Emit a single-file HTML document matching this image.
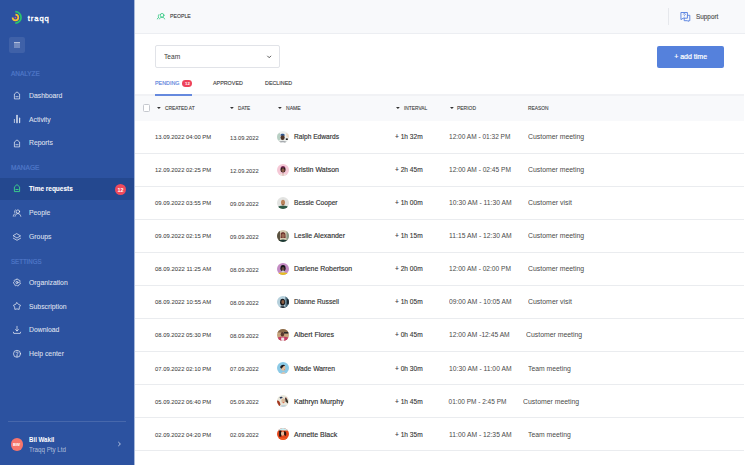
<!DOCTYPE html>
<html><head><meta charset="utf-8">
<style>
*{margin:0;padding:0;box-sizing:border-box}
html,body{width:745px;height:465px;overflow:hidden;background:#fff;font-family:"Liberation Sans",sans-serif}
.a{position:absolute;white-space:nowrap;line-height:1}
svg{position:absolute;overflow:visible}
</style></head><body>
<div class="a" style="left:0;top:0;width:134px;height:465px;background:#2c52a0"></div>
<svg style="left:0;top:0" width="30" height="30" viewBox="0 0 30 30">
<path d="M15.3 11.65 A5.75 5.75 0 0 1 15.3 23.15" fill="none" stroke="#2bc46d" stroke-width="1.7"/>
<path d="M15.45 14.6 A2.85 2.85 0 1 1 12.6 17.45" fill="none" stroke="#f7c12e" stroke-width="1.7"/>
<circle cx="15.4" cy="17.5" r="0.85" fill="#e8457a"/>
</svg>
<div class="a" style="left:27.70px;top:15.00px;font-size:7.6px;color:#fff;font-weight:normal;letter-spacing:0.95px;-webkit-text-stroke:0.35px #fff;">traqq</div>
<div class="a" style="left:9px;top:37px;width:16px;height:16px;border-radius:2px;background:rgba(255,255,255,0.09)"></div>
<div class="a" style="left:14px;top:42px;width:6px;height:6px;background:rgba(255,255,255,0.27);border-top:1px solid rgba(255,255,255,0.45)"></div>
<div class="a" style="left:10.60px;top:71.00px;font-size:6.3px;color:#5078c8;font-weight:normal;transform:scaleX(1.02);transform-origin:0 0;-webkit-text-stroke:0.2px #5078c8;">ANALYZE</div>
<svg style="left:10px;top:88px" width="14" height="14" viewBox="0 0 14 14"><g fill="none" stroke="rgba(255,255,255,0.78)" stroke-width="0.85" stroke-linecap="round" stroke-linejoin="round"><path d="M4.4 10.5 V6.0 L7 3.9 L9.6 6.0 V10.5 Z"/><path d="M5.9 8.7 H8.1"/></g></svg>
<div class="a" style="left:29.00px;top:92.00px;font-size:7.2px;color:rgba(255,255,255,0.8);font-weight:normal;transform:scaleX(0.95);transform-origin:0 0;-webkit-text-stroke:0.1px rgba(255,255,255,0.8);">Dashboard</div>
<svg style="left:10px;top:112px" width="14" height="14" viewBox="0 0 14 14"><g fill="none" stroke="rgba(255,255,255,0.78)" stroke-width="0.85" stroke-linecap="round" stroke-linejoin="round"><path d="M4.4 7.4 V10.6"/><path d="M7 3.6 V10.6" stroke-width="1.6"/><path d="M9.6 6.2 V10.6" stroke-width="1.2"/></g></svg>
<div class="a" style="left:29.00px;top:116.00px;font-size:7.2px;color:rgba(255,255,255,0.8);font-weight:normal;transform:scaleX(0.95);transform-origin:0 0;-webkit-text-stroke:0.1px rgba(255,255,255,0.8);">Activity</div>
<svg style="left:10px;top:136px" width="14" height="14" viewBox="0 0 14 14"><g fill="none" stroke="rgba(255,255,255,0.78)" stroke-width="0.85" stroke-linecap="round" stroke-linejoin="round"><path d="M4.4 10.5 V6.0 L7 3.9 L9.6 6.0 V10.5 Z"/><path d="M5.9 8.7 H8.1"/></g></svg>
<div class="a" style="left:29.00px;top:139.00px;font-size:7.2px;color:rgba(255,255,255,0.8);font-weight:normal;transform:scaleX(0.95);transform-origin:0 0;-webkit-text-stroke:0.1px rgba(255,255,255,0.8);">Reports</div>
<div class="a" style="left:10.60px;top:165.00px;font-size:6.3px;color:#5078c8;font-weight:normal;transform:scaleX(1.04);transform-origin:0 0;-webkit-text-stroke:0.2px #5078c8;">MANAGE</div>
<div class="a" style="left:0;top:178px;width:134px;height:21.6px;background:#24488f"></div>
<svg style="left:10px;top:181.3px" width="14" height="14" viewBox="0 0 14 14"><g fill="none" stroke="#3ccf8c" stroke-width="0.95" stroke-linecap="round" stroke-linejoin="round"><path d="M4.4 10.2 V5.9 L7 3.6 L9.6 5.9 V10.2 Z"/><path d="M5.9 8.5 H8.1"/></g></svg>
<div class="a" style="left:29.00px;top:185.00px;font-size:7.2px;color:#fff;font-weight:bold;transform:scaleX(0.9);transform-origin:0 0;-webkit-text-stroke:0.1px #fff;">Time requests</div>
<div class="a" style="left:115px;top:183.9px;width:11px;height:11px;border-radius:50%;background:#ef4a5c"></div>
<div class="a" style="left:117.40px;top:188.00px;font-size:5.4px;color:#fff;font-weight:bold;">12</div>
<svg style="left:10px;top:206px" width="14" height="14" viewBox="0 0 14 14"><g fill="none" stroke="rgba(255,255,255,0.78)" stroke-width="0.85" stroke-linecap="round" stroke-linejoin="round"><circle cx="7.9" cy="5.6" r="1.7"/><path d="M5 10.3 C5.4 8.4 6.5 7.6 7.9 7.6 C9.3 7.6 10.4 8.4 10.8 10.3"/><path d="M5.3 3.9 C4.4 4.4 4.3 6.2 5 7"/><path d="M3.3 10.2 C3.4 9 3.9 8.3 4.5 8"/></g></svg>
<div class="a" style="left:29.00px;top:209.00px;font-size:7.2px;color:rgba(255,255,255,0.8);font-weight:normal;transform:scaleX(0.95);transform-origin:0 0;-webkit-text-stroke:0.1px rgba(255,255,255,0.8);">People</div>
<svg style="left:10px;top:229.5px" width="14" height="14" viewBox="0 0 14 14"><g fill="none" stroke="rgba(255,255,255,0.78)" stroke-width="0.85" stroke-linecap="round" stroke-linejoin="round"><path d="M7 3.8 L10.6 5.9 L7 8 L3.4 5.9 Z"/><path d="M3.4 8.2 L7 10.3 L10.6 8.2"/></g></svg>
<div class="a" style="left:29.00px;top:233.00px;font-size:7.2px;color:rgba(255,255,255,0.8);font-weight:normal;transform:scaleX(0.95);transform-origin:0 0;-webkit-text-stroke:0.1px rgba(255,255,255,0.8);">Groups</div>
<div class="a" style="left:10.60px;top:259.00px;font-size:6.3px;color:#5078c8;font-weight:normal;transform:scaleX(0.97);transform-origin:0 0;-webkit-text-stroke:0.2px #5078c8;">SETTINGS</div>
<svg style="left:10px;top:275px" width="14" height="14" viewBox="0 0 14 14"><g fill="none" stroke="rgba(255,255,255,0.78)" stroke-width="0.85" stroke-linecap="round" stroke-linejoin="round"><path d="M7.00 4.00 L7.78 4.09 L8.26 4.89 L8.81 5.23 L9.74 5.32 L10.15 5.98 L9.83 6.85 L9.90 7.50 L10.41 8.28 L10.15 9.02 L9.27 9.31 L8.81 9.77 L8.52 10.65 L7.78 10.91 L7.00 10.40 L6.35 10.33 L5.48 10.65 L4.82 10.24 L4.73 9.31 L4.39 8.76 L3.59 8.28 L3.50 7.50 L4.17 6.85 L4.39 6.24 L4.26 5.32 L4.82 4.76 L5.74 4.89 L6.35 4.67 Z"/><circle cx="7" cy="7.5" r="1.1"/></g></svg>
<div class="a" style="left:29.00px;top:279.00px;font-size:7.2px;color:rgba(255,255,255,0.8);font-weight:normal;transform:scaleX(0.95);transform-origin:0 0;-webkit-text-stroke:0.1px rgba(255,255,255,0.8);">Organization</div>
<svg style="left:10px;top:299px" width="14" height="14" viewBox="0 0 14 14"><g fill="none" stroke="rgba(255,255,255,0.78)" stroke-width="0.85" stroke-linecap="round" stroke-linejoin="round"><path d="M7.00 3.70 L8.47 5.38 L10.52 6.26 L9.38 8.17 L9.17 10.39 L7.00 9.90 L4.83 10.39 L4.62 8.17 L3.48 6.26 L5.53 5.38 Z"/></g></svg>
<div class="a" style="left:29.00px;top:303.00px;font-size:7.2px;color:rgba(255,255,255,0.8);font-weight:normal;transform:scaleX(0.95);transform-origin:0 0;-webkit-text-stroke:0.1px rgba(255,255,255,0.8);">Subscription</div>
<svg style="left:10px;top:323px" width="14" height="14" viewBox="0 0 14 14"><g fill="none" stroke="rgba(255,255,255,0.78)" stroke-width="0.85" stroke-linecap="round" stroke-linejoin="round"><path d="M7 3.3 V7.9"/><path d="M5.5 6.6 L7 8 L8.5 6.6"/><path d="M3.4 9.2 L3.8 10.4 H10.2 L10.6 9.2"/></g></svg>
<div class="a" style="left:29.00px;top:326.00px;font-size:7.2px;color:rgba(255,255,255,0.8);font-weight:normal;transform:scaleX(0.95);transform-origin:0 0;-webkit-text-stroke:0.1px rgba(255,255,255,0.8);">Download</div>
<svg style="left:10px;top:347px" width="14" height="14" viewBox="0 0 14 14"><g fill="none" stroke="rgba(255,255,255,0.78)" stroke-width="0.85" stroke-linecap="round" stroke-linejoin="round"><circle cx="7" cy="6.8" r="3.5"/><path d="M6 5.7 C6 4.6 8 4.6 8 5.8 C8 6.7 7 6.7 7 7.7"/><circle cx="7" cy="9" r="0.2"/></g></svg>
<div class="a" style="left:29.00px;top:350.00px;font-size:7.2px;color:rgba(255,255,255,0.8);font-weight:normal;transform:scaleX(0.95);transform-origin:0 0;-webkit-text-stroke:0.1px rgba(255,255,255,0.8);">Help center</div>
<div class="a" style="left:8px;top:421px;width:118px;height:1px;background:rgba(255,255,255,0.13)"></div>
<div class="a" style="left:10.6px;top:438.3px;width:12.7px;height:12.7px;border-radius:50%;background:#f6756c"></div>
<div class="a" style="left:13.00px;top:443.00px;font-size:4.2px;color:#fff;font-weight:bold;">BW</div>
<div class="a" style="left:29.40px;top:437.00px;font-size:6.6px;color:#fff;font-weight:bold;transform:scaleX(0.93);transform-origin:0 0;">Bil Wakil</div>
<div class="a" style="left:28.90px;top:447.00px;font-size:6.6px;color:rgba(255,255,255,0.62);font-weight:normal;transform:scaleX(0.94);transform-origin:0 0;">Traqq Pty Ltd</div>
<svg style="left:114px;top:439px" width="10" height="10" viewBox="0 0 10 10"><path d="M4.6 3.3 L6.4 5 L4.6 6.7" fill="none" stroke="rgba(255,255,255,0.75)" stroke-width="0.9" stroke-linecap="round" stroke-linejoin="round"/></svg>
<div class="a" style="left:134px;top:0;width:1px;height:465px;background:#a8b9da;z-index:5"></div>
<div class="a" style="left:134px;top:0;width:611px;height:34px;background:#f8f9fb;border-bottom:1px solid #eceef2"></div>
<svg style="left:150px;top:6px" width="20" height="20" viewBox="0 0 20 20"><g fill="none" stroke="#3fcb8a" stroke-width="0.95" stroke-linecap="round"><circle cx="12.1" cy="9.3" r="1.85"/><path d="M9.4 12.9 C9.7 11.9 10.7 11.3 12.1 11.3 C13.5 11.3 14.4 11.9 14.6 12.9"/><path d="M9.0 8.4 C8.2 9.0 8.1 10.4 8.5 11.2"/><path d="M7.4 12.9 C7.6 12.2 8.0 11.7 8.5 11.4"/></g></svg>
<div class="a" style="left:169.80px;top:14.00px;font-size:5.7px;color:#404040;font-weight:normal;transform:scaleX(0.91);transform-origin:0 0;-webkit-text-stroke:0.12px #404040;">PEOPLE</div>
<div class="a" style="left:668px;top:8px;width:1px;height:17px;background:#e6e8ec"></div>
<svg style="left:676px;top:8px" width="20" height="20" viewBox="0 0 20 20"><g fill="none" stroke="#5a84e0" stroke-width="0.95" stroke-linejoin="round" stroke-linecap="round"><path d="M5.3 4.5 H11.4 V10.2 H7.2 L5.3 11.4 Z"/><path d="M11.4 7.3 H13.8 V12.7 L12.4 12.7 V13.4 L11.3 12.7 H8.2 V10.2"/><path d="M7.3 6.0 C7.4 5.3 9.3 5.3 9.3 6.2 C9.3 7.0 8.3 7.0 8.3 7.8"/></g><circle cx="8.3" cy="9.0" r="0.35" fill="#5a84e0"/></svg>
<div class="a" style="left:696.00px;top:13.00px;font-size:7.0px;color:#4a4a4a;font-weight:normal;transform:scaleX(0.91);transform-origin:0 0;-webkit-text-stroke:0.12px #4a4a4a;">Support</div>
<div class="a" style="left:155px;top:45px;width:124.5px;height:22.6px;border:1px solid #e1e3e8;border-radius:2px;background:#fff"></div>
<div class="a" style="left:164.10px;top:54.00px;font-size:6.7px;color:#3a3a3a;font-weight:normal;transform:scaleX(0.99);transform-origin:0 0;">Team</div>
<svg style="left:264px;top:52px" width="10" height="10" viewBox="0 0 10 10"><path d="M3.6 4.1 L5.2 5.7 L6.8 4.1" fill="none" stroke="#444" stroke-width="0.9" stroke-linecap="round" stroke-linejoin="round"/></svg>
<div class="a" style="left:657.3px;top:45.9px;width:66.6px;height:21.8px;border-radius:2px;background:#5581dc"></div>
<div class="a" style="left:674.20px;top:53.00px;font-size:7.0px;color:#fff;font-weight:normal;-webkit-text-stroke:0.2px #fff;">+ add time</div>
<div class="a" style="left:155.40px;top:81.00px;font-size:5.6px;color:#5b82dc;font-weight:normal;transform:scaleX(0.96);transform-origin:0 0;-webkit-text-stroke:0.15px #5b82dc;">PENDING</div>
<div class="a" style="left:182.2px;top:80px;width:10.1px;height:6.8px;border-radius:3.4px;background:#ee4259"></div>
<div class="a" style="left:185.00px;top:82.00px;font-size:4.3px;color:#fff;font-weight:bold;">12</div>
<div class="a" style="left:213.00px;top:81.00px;font-size:5.6px;color:#404040;font-weight:normal;transform:scaleX(0.96);transform-origin:0 0;-webkit-text-stroke:0.12px #404040;">APPROVED</div>
<div class="a" style="left:264.80px;top:81.00px;font-size:5.6px;color:#404040;font-weight:normal;transform:scaleX(0.96);transform-origin:0 0;-webkit-text-stroke:0.12px #404040;">DECLINED</div>
<div class="a" style="left:134px;top:94px;width:610px;height:27px;background:#f8f9fb;border-top:2px solid #f1f2f5"></div>
<div class="a" style="left:155px;top:94px;width:37.3px;height:2px;background:#6589de"></div>
<div class="a" style="left:143px;top:104.2px;width:7.3px;height:7.4px;border:0.8px solid #c5c8ce;border-radius:1.5px;background:#fff"></div>
<svg style="left:157.3px;top:107.3px" width="4" height="2.2" viewBox="0 0 4 2.2"><path d="M0 0 H3.8 L1.9 2 Z" fill="#333"/></svg>
<div class="a" style="left:165.40px;top:106.00px;font-size:5.45px;color:#444;font-weight:normal;transform:scaleX(0.89);transform-origin:0 0;-webkit-text-stroke:0.12px #444;">CREATED AT</div>
<svg style="left:229.8px;top:107.3px" width="4" height="2.2" viewBox="0 0 4 2.2"><path d="M0 0 H3.8 L1.9 2 Z" fill="#333"/></svg>
<div class="a" style="left:237.90px;top:106.00px;font-size:5.45px;color:#444;font-weight:normal;transform:scaleX(0.86);transform-origin:0 0;-webkit-text-stroke:0.12px #444;">DATE</div>
<svg style="left:277.5px;top:107.3px" width="4" height="2.2" viewBox="0 0 4 2.2"><path d="M0 0 H3.8 L1.9 2 Z" fill="#333"/></svg>
<div class="a" style="left:285.80px;top:106.00px;font-size:5.45px;color:#444;font-weight:normal;transform:scaleX(0.93);transform-origin:0 0;-webkit-text-stroke:0.12px #444;">NAME</div>
<svg style="left:395.8px;top:107.3px" width="4" height="2.2" viewBox="0 0 4 2.2"><path d="M0 0 H3.8 L1.9 2 Z" fill="#333"/></svg>
<div class="a" style="left:403.90px;top:106.00px;font-size:5.45px;color:#444;font-weight:normal;transform:scaleX(0.89);transform-origin:0 0;-webkit-text-stroke:0.12px #444;">INTERVAL</div>
<svg style="left:449.6px;top:107.3px" width="4" height="2.2" viewBox="0 0 4 2.2"><path d="M0 0 H3.8 L1.9 2 Z" fill="#333"/></svg>
<div class="a" style="left:457.20px;top:106.00px;font-size:5.45px;color:#444;font-weight:normal;transform:scaleX(0.91);transform-origin:0 0;-webkit-text-stroke:0.12px #444;">PERIOD</div>
<div class="a" style="left:528.10px;top:106.00px;font-size:5.45px;color:#444;font-weight:normal;transform:scaleX(0.89);transform-origin:0 0;-webkit-text-stroke:0.12px #444;">REASON</div>
<div class="a" style="left:134px;top:153.03px;width:610px;height:1px;background:#eaecef"></div>
<div class="a" style="left:155.40px;top:134.00px;font-size:6.2px;color:#444;font-weight:normal;transform:scaleX(0.9495603012956522);transform-origin:0 0;-webkit-text-stroke:0.05px #444;">13.09.2022 04:00 PM</div>
<div class="a" style="left:230.20px;top:135.00px;font-size:6.2px;color:#444;font-weight:normal;transform:scaleX(0.9248815700428604);transform-origin:0 0;-webkit-text-stroke:0.05px #444;">13.09.2022</div>
<svg style="left:277.2px;top:130.90px" width="12" height="12" viewBox="0 0 12 12"><defs><clipPath id="c0"><circle cx="6" cy="6" r="6"/></clipPath></defs><g clip-path="url(#c0)"><rect width="12" height="12" fill="#eef0ee"/><path d="M0 3 L3 2 L3.5 9 L0 10Z" fill="#b8d0c4"/><path d="M9 2 L12 3 V7 L9.5 6Z" fill="#f0d8c0"/><ellipse cx="5.6" cy="6.4" rx="2.1" ry="2.6" fill="#4e3326"/><path d="M3.2 4.4 C3.4 2.2 7.6 2.2 8 4.4 Z" fill="#2f558e"/><path d="M1.5 12 C2 9.2 9 9 10.5 12Z" fill="#a8acb0"/><path d="M3 12 C4 10.5 7 10.5 8 12Z" fill="#e8eaec"/><rect x="8.8" y="7.4" width="2" height="1.6" fill="#222"/></g></svg>
<div class="a" style="left:294.00px;top:134.00px;font-size:6.85px;color:#333;font-weight:normal;transform:scaleX(0.9687867668033374);transform-origin:0 0;-webkit-text-stroke:0.15px #333;">Ralph Edwards</div>
<div class="a" style="left:395.00px;top:134.00px;font-size:6.6px;color:#333;font-weight:normal;-webkit-text-stroke:0.1px #333;">+ 1h 32m</div>
<div class="a" style="left:448.60px;top:134.00px;font-size:6.5px;color:#4a4a4a;font-weight:normal;transform:scaleX(1.0055518252239564);transform-origin:0 0;">12:00 AM - 01:32 PM</div>
<div class="a" style="left:528.00px;top:134.00px;font-size:6.5px;color:#4a4a4a;font-weight:normal;transform:scaleX(1.0582807645231147);transform-origin:0 0;">Customer meeting</div>
<div class="a" style="left:134px;top:186.06px;width:610px;height:1px;background:#eaecef"></div>
<div class="a" style="left:155.40px;top:167.00px;font-size:6.2px;color:#444;font-weight:normal;transform:scaleX(0.9495603012956522);transform-origin:0 0;-webkit-text-stroke:0.05px #444;">12.09.2022 02:25 PM</div>
<div class="a" style="left:230.20px;top:168.00px;font-size:6.2px;color:#444;font-weight:normal;transform:scaleX(0.9248815700428604);transform-origin:0 0;-webkit-text-stroke:0.05px #444;">12.09.2022</div>
<svg style="left:277.2px;top:163.93px" width="12" height="12" viewBox="0 0 12 12"><defs><clipPath id="c1"><circle cx="6" cy="6" r="6"/></clipPath></defs><g clip-path="url(#c1)"><rect width="12" height="12" fill="#f5c8d6"/><ellipse cx="6" cy="5.4" rx="2.5" ry="3" fill="#2a1a1c"/><path d="M3.6 3.6 C4.5 1.8 7.5 1.8 8.4 3.6Z" fill="#8a2a60"/><ellipse cx="6" cy="6.2" rx="1.5" ry="2" fill="#8a5a46"/><path d="M2.4 12 C3 8.8 9 8.8 9.6 12Z" fill="#ebe4de"/><path d="M5.4 9 L6.6 9 L6.3 12 L5.7 12Z" fill="#d8a0a0"/></g></svg>
<div class="a" style="left:294.00px;top:167.00px;font-size:6.85px;color:#333;font-weight:normal;transform:scaleX(1.0250184218588596);transform-origin:0 0;-webkit-text-stroke:0.15px #333;">Kristin Watson</div>
<div class="a" style="left:395.00px;top:167.00px;font-size:6.6px;color:#333;font-weight:normal;-webkit-text-stroke:0.1px #333;">+ 2h 45m</div>
<div class="a" style="left:448.60px;top:167.00px;font-size:6.5px;color:#4a4a4a;font-weight:normal;transform:scaleX(1.0137403580026532);transform-origin:0 0;">12:00 AM - 02:45 PM</div>
<div class="a" style="left:528.00px;top:167.00px;font-size:6.5px;color:#4a4a4a;font-weight:normal;transform:scaleX(1.0582807645231147);transform-origin:0 0;">Customer meeting</div>
<div class="a" style="left:134px;top:219.09px;width:610px;height:1px;background:#eaecef"></div>
<div class="a" style="left:155.40px;top:200.00px;font-size:6.2px;color:#444;font-weight:normal;transform:scaleX(0.9495603012956522);transform-origin:0 0;-webkit-text-stroke:0.05px #444;">09.09.2022 03:55 PM</div>
<div class="a" style="left:230.20px;top:201.00px;font-size:6.2px;color:#444;font-weight:normal;transform:scaleX(0.9248815700428604);transform-origin:0 0;-webkit-text-stroke:0.05px #444;">09.09.2022</div>
<svg style="left:277.2px;top:196.96px" width="12" height="12" viewBox="0 0 12 12"><defs><clipPath id="c2"><circle cx="6" cy="6" r="6"/></clipPath></defs><g clip-path="url(#c2)"><rect width="12" height="12" fill="#e2e3e1"/><ellipse cx="6" cy="5.6" rx="2" ry="2.8" fill="#b8825a"/><path d="M4.6 7.6 C5 8.6 7 8.6 7.4 7.6Z" fill="#6a4030"/><path d="M0.5 10 C2.5 8.4 9.5 8.4 11.5 10 V12 H0.5Z" fill="#2d5a46"/></g></svg>
<div class="a" style="left:294.00px;top:200.00px;font-size:6.85px;color:#333;font-weight:normal;transform:scaleX(0.9704167561594199);transform-origin:0 0;-webkit-text-stroke:0.15px #333;">Bessie Cooper</div>
<div class="a" style="left:395.00px;top:200.00px;font-size:6.6px;color:#333;font-weight:normal;-webkit-text-stroke:0.1px #333;">+ 1h 00m</div>
<div class="a" style="left:448.60px;top:200.00px;font-size:6.5px;color:#4a4a4a;font-weight:normal;transform:scaleX(1.0394786001909584);transform-origin:0 0;">10:30 AM - 11:30 AM</div>
<div class="a" style="left:528.00px;top:200.00px;font-size:6.5px;color:#4a4a4a;font-weight:normal;transform:scaleX(1.0661162042377512);transform-origin:0 0;">Customer visit</div>
<div class="a" style="left:134px;top:252.12px;width:610px;height:1px;background:#eaecef"></div>
<div class="a" style="left:155.40px;top:233.00px;font-size:6.2px;color:#444;font-weight:normal;transform:scaleX(0.9495603012956522);transform-origin:0 0;-webkit-text-stroke:0.05px #444;">09.09.2022 02:15 PM</div>
<div class="a" style="left:230.20px;top:234.00px;font-size:6.2px;color:#444;font-weight:normal;transform:scaleX(0.9248815700428604);transform-origin:0 0;-webkit-text-stroke:0.05px #444;">09.09.2022</div>
<svg style="left:277.2px;top:229.99px" width="12" height="12" viewBox="0 0 12 12"><defs><clipPath id="c3"><circle cx="6" cy="6" r="6"/></clipPath></defs><g clip-path="url(#c3)"><rect width="12" height="12" fill="#d4cab0"/><rect x="0" y="0" width="3" height="12" fill="#5a5240"/><rect x="9.5" y="0" width="2.5" height="12" fill="#8a9a88"/><path d="M3.8 3.6 C4.5 1.8 7.8 1.8 8.4 4 L8.6 8 L3.6 8Z" fill="#6a2c2a"/><ellipse cx="6.1" cy="5.8" rx="1.7" ry="2.2" fill="#9a6a52"/><path d="M1.5 12 C2.5 8.8 9.5 8.8 10.5 12Z" fill="#1c3a36"/></g></svg>
<div class="a" style="left:294.00px;top:233.00px;font-size:6.85px;color:#333;font-weight:normal;transform:scaleX(1.0166058891521588);transform-origin:0 0;-webkit-text-stroke:0.15px #333;">Leslie Alexander</div>
<div class="a" style="left:395.00px;top:233.00px;font-size:6.6px;color:#333;font-weight:normal;-webkit-text-stroke:0.1px #333;">+ 1h 15m</div>
<div class="a" style="left:448.60px;top:233.00px;font-size:6.5px;color:#4a4a4a;font-weight:normal;transform:scaleX(1.0394786001909584);transform-origin:0 0;">11:15 AM - 12:30 AM</div>
<div class="a" style="left:528.00px;top:233.00px;font-size:6.5px;color:#4a4a4a;font-weight:normal;transform:scaleX(1.0582807645231147);transform-origin:0 0;">Customer meeting</div>
<div class="a" style="left:134px;top:285.15px;width:610px;height:1px;background:#eaecef"></div>
<div class="a" style="left:155.40px;top:266.00px;font-size:6.2px;color:#444;font-weight:normal;transform:scaleX(0.9625445369186265);transform-origin:0 0;-webkit-text-stroke:0.05px #444;">08.09.2022 11:25 AM</div>
<div class="a" style="left:230.20px;top:267.00px;font-size:6.2px;color:#444;font-weight:normal;transform:scaleX(0.9248815700428604);transform-origin:0 0;-webkit-text-stroke:0.05px #444;">08.09.2022</div>
<svg style="left:277.2px;top:263.02px" width="12" height="12" viewBox="0 0 12 12"><defs><clipPath id="c4"><circle cx="6" cy="6" r="6"/></clipPath></defs><g clip-path="url(#c4)"><rect width="12" height="12" fill="#c48cc4"/><ellipse cx="6" cy="5.2" rx="2.6" ry="3.2" fill="#18141a"/><ellipse cx="6" cy="6" rx="1.5" ry="1.9" fill="#6a4a42"/><rect x="4.6" y="7.6" width="2.8" height="2" fill="#cfd0e6"/><path d="M1 10.4 C3 9.2 9 9.2 11 10.4 V12 H1Z" fill="#e6c022"/></g></svg>
<div class="a" style="left:294.00px;top:266.00px;font-size:6.85px;color:#333;font-weight:normal;transform:scaleX(1.0121932767409465);transform-origin:0 0;-webkit-text-stroke:0.15px #333;">Darlene Robertson</div>
<div class="a" style="left:395.00px;top:266.00px;font-size:6.6px;color:#333;font-weight:normal;-webkit-text-stroke:0.1px #333;">+ 2h 00m</div>
<div class="a" style="left:448.60px;top:266.00px;font-size:6.5px;color:#4a4a4a;font-weight:normal;transform:scaleX(1.0137403580026532);transform-origin:0 0;">12:00 AM - 02:00 PM</div>
<div class="a" style="left:528.00px;top:266.00px;font-size:6.5px;color:#4a4a4a;font-weight:normal;transform:scaleX(1.0582807645231147);transform-origin:0 0;">Customer meeting</div>
<div class="a" style="left:134px;top:318.18px;width:610px;height:1px;background:#eaecef"></div>
<div class="a" style="left:155.40px;top:299.00px;font-size:6.2px;color:#444;font-weight:normal;transform:scaleX(0.9550531301315022);transform-origin:0 0;-webkit-text-stroke:0.05px #444;">08.09.2022 10:55 AM</div>
<div class="a" style="left:230.20px;top:300.00px;font-size:6.2px;color:#444;font-weight:normal;transform:scaleX(0.9248815700428604);transform-origin:0 0;-webkit-text-stroke:0.05px #444;">08.09.2022</div>
<svg style="left:277.2px;top:296.05px" width="12" height="12" viewBox="0 0 12 12"><defs><clipPath id="c5"><circle cx="6" cy="6" r="6"/></clipPath></defs><g clip-path="url(#c5)"><rect width="12" height="12" fill="#b6d0dc"/><rect x="8.4" y="0" width="3.6" height="12" fill="#4a6878"/><path d="M10 3 L12 3 L12 9 L10 8Z" fill="#1e2a34"/><ellipse cx="5.6" cy="6.2" rx="2.5" ry="3.4" fill="#18181c"/><ellipse cx="5.9" cy="6" rx="1.5" ry="2.1" fill="#8c6046"/><path d="M2 12 C3 9.6 8 9.6 9 12Z" fill="#1c2630"/></g></svg>
<div class="a" style="left:294.00px;top:299.00px;font-size:6.85px;color:#333;font-weight:normal;transform:scaleX(0.9767087519615568);transform-origin:0 0;-webkit-text-stroke:0.15px #333;">Dianne Russell</div>
<div class="a" style="left:395.00px;top:299.00px;font-size:6.6px;color:#333;font-weight:normal;-webkit-text-stroke:0.1px #333;">+ 1h 05m</div>
<div class="a" style="left:448.60px;top:299.00px;font-size:6.5px;color:#4a4a4a;font-weight:normal;transform:scaleX(1.0312420206413138);transform-origin:0 0;">09:00 AM - 10:05 AM</div>
<div class="a" style="left:528.00px;top:299.00px;font-size:6.5px;color:#4a4a4a;font-weight:normal;transform:scaleX(1.0661162042377512);transform-origin:0 0;">Customer visit</div>
<div class="a" style="left:134px;top:351.21px;width:610px;height:1px;background:#eaecef"></div>
<div class="a" style="left:155.40px;top:332.00px;font-size:6.2px;color:#444;font-weight:normal;transform:scaleX(0.9495603012956522);transform-origin:0 0;-webkit-text-stroke:0.05px #444;">08.09.2022 05:30 PM</div>
<div class="a" style="left:230.20px;top:333.00px;font-size:6.2px;color:#444;font-weight:normal;transform:scaleX(0.9248815700428604);transform-origin:0 0;-webkit-text-stroke:0.05px #444;">08.09.2022</div>
<svg style="left:277.2px;top:329.08px" width="12" height="12" viewBox="0 0 12 12"><defs><clipPath id="c6"><circle cx="6" cy="6" r="6"/></clipPath></defs><g clip-path="url(#c6)"><rect width="12" height="12" fill="#c6a47e"/><path d="M0 0 H12 V3.6 H0Z" fill="#8a6a4a"/><rect x="7" y="3" width="4.5" height="1.6" fill="#2a2a2a"/><ellipse cx="5.4" cy="5.2" rx="1.7" ry="2.2" fill="#5a3a2e"/><path d="M0.5 8.6 C3 7.4 9 7.4 11.5 8.6 V12 H0.5Z" fill="#c63c64"/><rect x="4.2" y="8.6" width="3" height="3.4" fill="#f2e6ea"/></g></svg>
<div class="a" style="left:294.00px;top:332.00px;font-size:6.85px;color:#333;font-weight:normal;transform:scaleX(1.0326361966026014);transform-origin:0 0;-webkit-text-stroke:0.15px #333;">Albert Flores</div>
<div class="a" style="left:395.00px;top:332.00px;font-size:6.6px;color:#333;font-weight:normal;-webkit-text-stroke:0.1px #333;">+ 0h 45m</div>
<div class="a" style="left:448.60px;top:332.00px;font-size:6.5px;color:#4a4a4a;font-weight:normal;transform:scaleX(1.0306215140118682);transform-origin:0 0;">12:00 AM -12:45 AM</div>
<div class="a" style="left:526.00px;top:332.00px;font-size:6.5px;color:#4a4a4a;font-weight:normal;transform:scaleX(1.0582807645231147);transform-origin:0 0;">Customer meeting</div>
<div class="a" style="left:134px;top:384.24px;width:610px;height:1px;background:#eaecef"></div>
<div class="a" style="left:155.40px;top:366.00px;font-size:6.2px;color:#444;font-weight:normal;transform:scaleX(0.9495603012956522);transform-origin:0 0;-webkit-text-stroke:0.05px #444;">07.09.2022 02:10 PM</div>
<div class="a" style="left:230.20px;top:366.00px;font-size:6.2px;color:#444;font-weight:normal;transform:scaleX(0.9248815700428604);transform-origin:0 0;-webkit-text-stroke:0.05px #444;">07.09.2022</div>
<svg style="left:277.2px;top:362.11px" width="12" height="12" viewBox="0 0 12 12"><defs><clipPath id="c7"><circle cx="6" cy="6" r="6"/></clipPath></defs><g clip-path="url(#c7)"><rect width="12" height="12" fill="#8ccae6"/><ellipse cx="6.2" cy="6" rx="2.2" ry="2.8" fill="#e4bc9c"/><path d="M3.2 5.6 C3.2 2.6 7 2 8.2 3.6 L6.5 4.2 L4.4 6.8Z" fill="#1e1c20"/><path d="M6.8 7.4 L8 7.6 L7.4 8.2Z" fill="#c06060"/><path d="M4 12 C4.8 9.8 8.2 9.8 9 12Z" fill="#e6c4ac"/></g></svg>
<div class="a" style="left:294.00px;top:366.00px;font-size:6.85px;color:#333;font-weight:normal;transform:scaleX(0.9845749917952085);transform-origin:0 0;-webkit-text-stroke:0.15px #333;">Wade Warren</div>
<div class="a" style="left:395.00px;top:366.00px;font-size:6.6px;color:#333;font-weight:normal;-webkit-text-stroke:0.1px #333;">+ 0h 30m</div>
<div class="a" style="left:448.60px;top:366.00px;font-size:6.5px;color:#4a4a4a;font-weight:normal;transform:scaleX(1.0378180912449666);transform-origin:0 0;">10:30 AM - 11:00 AM</div>
<div class="a" style="left:528.30px;top:366.00px;font-size:6.5px;color:#4a4a4a;font-weight:normal;transform:scaleX(1.0483387015786316);transform-origin:0 0;">Team meeting</div>
<div class="a" style="left:134px;top:417.27px;width:610px;height:1px;background:#eaecef"></div>
<div class="a" style="left:155.40px;top:399.00px;font-size:6.2px;color:#444;font-weight:normal;transform:scaleX(0.9495603012956522);transform-origin:0 0;-webkit-text-stroke:0.05px #444;">05.09.2022 06:40 PM</div>
<div class="a" style="left:230.20px;top:399.00px;font-size:6.2px;color:#444;font-weight:normal;transform:scaleX(0.9248815700428604);transform-origin:0 0;-webkit-text-stroke:0.05px #444;">05.09.2022</div>
<svg style="left:277.2px;top:395.14px" width="12" height="12" viewBox="0 0 12 12"><defs><clipPath id="c8"><circle cx="6" cy="6" r="6"/></clipPath></defs><g clip-path="url(#c8)"><rect width="12" height="12" fill="#e8e6da"/><path d="M0 5.5 C1.5 5 3 6.5 3.4 9.5 L2 12 H0Z" fill="#a43820"/><path d="M2.5 2.6 C3.5 1.4 5.4 1.6 5.6 2.8 L3.6 3.8Z" fill="#2a3a5a"/><path d="M8 2.4 C10.2 3 11.4 5.5 11 8.5 L8.4 6.6Z" fill="#36362e"/><path d="M8.2 2.8 L9.4 2.4 L9.6 4 Z" fill="#b02828"/><ellipse cx="6.3" cy="5.8" rx="2" ry="2.6" fill="#dab89a"/><circle cx="6.6" cy="7.6" r="0.5" fill="#e04a3a"/><path d="M2.6 12 C3.6 9.4 9.4 9.4 10.4 12Z" fill="#c2d2da"/></g></svg>
<div class="a" style="left:294.00px;top:399.00px;font-size:6.85px;color:#333;font-weight:normal;transform:scaleX(1.0278331849489653);transform-origin:0 0;-webkit-text-stroke:0.15px #333;">Kathryn Murphy</div>
<div class="a" style="left:395.00px;top:399.00px;font-size:6.6px;color:#333;font-weight:normal;-webkit-text-stroke:0.1px #333;">+ 1h 45m</div>
<div class="a" style="left:448.60px;top:399.00px;font-size:6.5px;color:#4a4a4a;font-weight:normal;">01:00 PM - 2:45 PM</div>
<div class="a" style="left:523.10px;top:399.00px;font-size:6.5px;color:#4a4a4a;font-weight:normal;transform:scaleX(1.0582807645231147);transform-origin:0 0;">Customer meeting</div>
<div class="a" style="left:134px;top:450.30px;width:610px;height:1px;background:#eaecef"></div>
<div class="a" style="left:155.40px;top:432.00px;font-size:6.2px;color:#444;font-weight:normal;transform:scaleX(0.9495603012956522);transform-origin:0 0;-webkit-text-stroke:0.05px #444;">02.09.2022 04:20 PM</div>
<div class="a" style="left:230.20px;top:432.00px;font-size:6.2px;color:#444;font-weight:normal;transform:scaleX(0.9248815700428604);transform-origin:0 0;-webkit-text-stroke:0.05px #444;">02.09.2022</div>
<svg style="left:277.2px;top:428.17px" width="12" height="12" viewBox="0 0 12 12"><defs><clipPath id="c9"><circle cx="6" cy="6" r="6"/></clipPath></defs><g clip-path="url(#c9)"><rect width="12" height="12" fill="#e6481c"/><path d="M0 0 H12 V2.6 H0Z" fill="#c8eef4"/><rect x="2.2" y="2.6" width="2.2" height="6" fill="#161214"/><ellipse cx="5.6" cy="5.6" rx="1.6" ry="2.2" fill="#e2b89a"/><path d="M7 3.4 C8.8 3 9.8 5 9 8 L7.2 7Z" fill="#2a1410"/><path d="M1 12 C2 9.4 10 9.4 11 12Z" fill="#f05a22"/></g></svg>
<div class="a" style="left:294.00px;top:432.00px;font-size:6.85px;color:#333;font-weight:normal;transform:scaleX(1.0241684839941152);transform-origin:0 0;-webkit-text-stroke:0.15px #333;">Annette Black</div>
<div class="a" style="left:395.00px;top:432.00px;font-size:6.6px;color:#333;font-weight:normal;-webkit-text-stroke:0.1px #333;">+ 1h 35m</div>
<div class="a" style="left:448.60px;top:432.00px;font-size:6.5px;color:#4a4a4a;font-weight:normal;transform:scaleX(1.0378180912449666);transform-origin:0 0;">11:00 AM - 12:35 AM</div>
<div class="a" style="left:528.30px;top:432.00px;font-size:6.5px;color:#4a4a4a;font-weight:normal;transform:scaleX(1.0483387015786316);transform-origin:0 0;">Team meeting</div>
</body></html>
